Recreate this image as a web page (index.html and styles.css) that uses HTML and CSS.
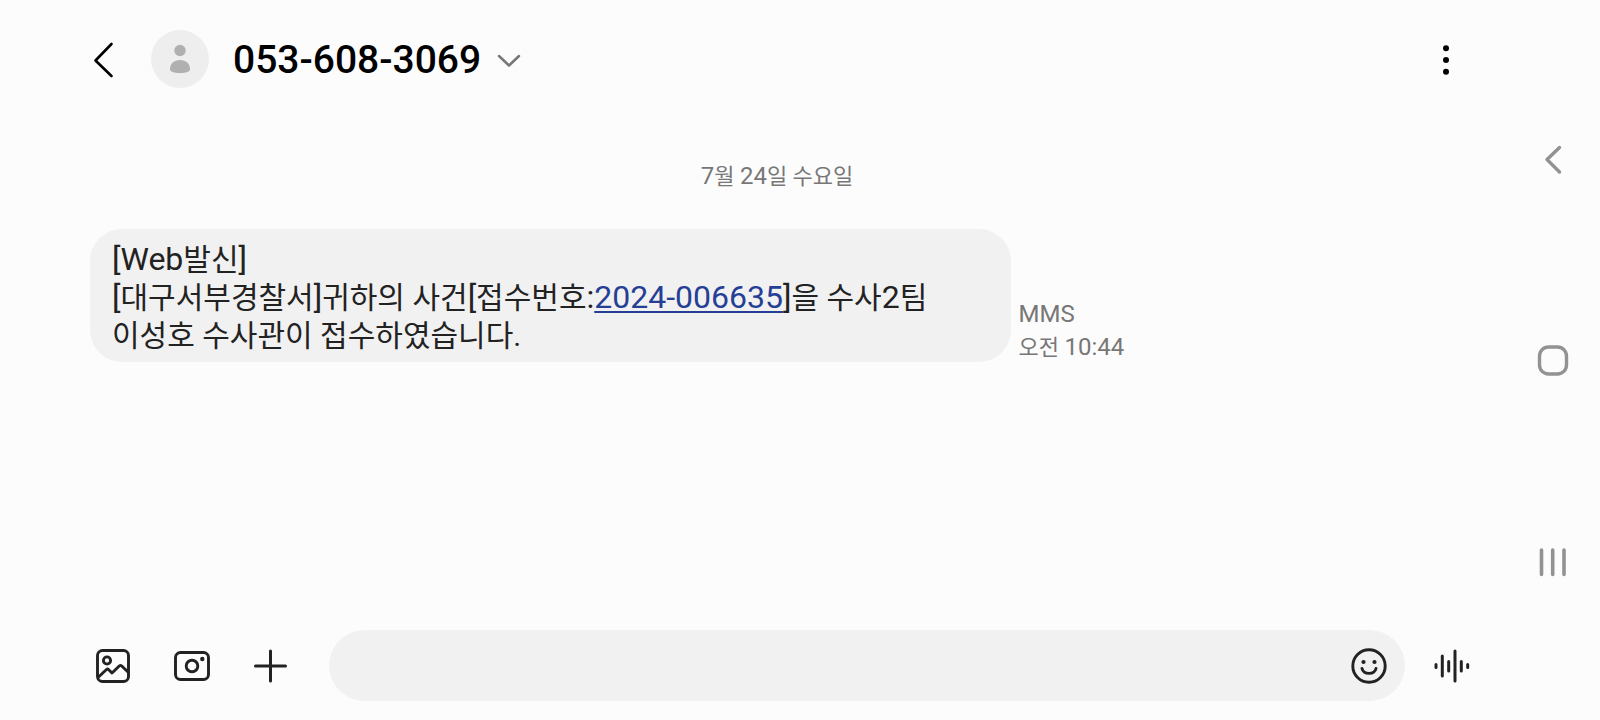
FILE: index.html
```html
<!DOCTYPE html>
<html lang="ko">
<head>
    <meta charset="UTF-8">
    <meta name="viewport" content="width=device-width, initial-scale=1.0">
    <title>053-608-3069</title>
    <link rel="stylesheet" href="styles.css">
</head>
<body>
    <div class="app">
        <header class="header">
            <button class="icon-button back" aria-label="뒤로">
                <svg width="24" height="40" viewBox="0 0 24 40"><path d="M19.500 5L3.500 21.500L19.500 37" class="line black" stroke-width="2.600"/></svg>
            </button>
            <div class="avatar">
                <svg width="58" height="58" viewBox="0 0 58 58"><circle cx="29" cy="20.500" r="5.700"/><path d="M19 39.500C19 33.500 23 30 29 30S39 33.500 39 39.500C39 41.500 35 43 29 43S19 41.500 19 39.500Z"/></svg>
            </div>
            <button class="contact">
                <span class="number">053-608-3069</span>
                <svg width="24" height="18" viewBox="0 0 24 18"><path d="M2 5L12 14.500L22 5" class="line gray" stroke-width="2.500"/></svg>
            </button>
            <button class="icon-button menu" aria-label="더보기">
                <svg width="10" height="34" viewBox="0 0 10 34"><circle cx="5" cy="6.300" r="3"/><circle cx="5" cy="18" r="3"/><circle cx="5" cy="29.700" r="3"/></svg>
            </button>
        </header>

        <main class="thread">
            <div class="date"><span class="latin">7</span>월 <span class="latin">24</span>일 수요일</div>
            <div class="message">
                <div class="bubble">
                    <span class="latin">[Web</span>발신<span class="latin">]</span><br>
                    <span class="latin">[</span>대구서부경찰서<span class="latin">]</span>귀하의 사건<span class="latin">[</span>접수번호<span class="latin">:<a href="#">2024-006635</a>]</span>을 수사<span class="latin">2</span>팀<br>
                    이성호 수사관이 접수하였습니다.
                </div>
                <div class="meta">
                    <div class="latin">MMS</div>
                    <div>오전 <span class="latin">10:44</span></div>
                </div>
            </div>
        </main>

        <form class="composer">
            <div class="tools">
                <button type="button" class="icon-button" aria-label="갤러리">
                    <svg width="36" height="36" viewBox="0 0 36 36" class="line dark" stroke-width="2.900"><rect x="2.500" y="2.500" width="31" height="31" rx="5"/><circle cx="12" cy="12.500" r="3.600"/><path d="M3.500 29L11.500 21.500Q12.500 20.500 13.500 21.500L17 25L24.500 17.800Q25.500 17 26.500 17.800L33 24"/></svg>
                </button>
                <button type="button" class="icon-button" aria-label="카메라">
                    <svg width="38" height="32" viewBox="0 0 38 32"><g class="line dark" stroke-width="2.900"><rect x="2.500" y="2.500" width="33" height="27" rx="5"/><circle cx="19" cy="16" r="5.800"/></g><circle cx="29.300" cy="9" r="2.200" class="dot"/></svg>
                </button>
                <button type="button" class="icon-button" aria-label="추가">
                    <svg width="36" height="36" viewBox="0 0 36 36"><path d="M17.500 3V33M2.500 18H32.500" class="line dark" stroke-width="3"/></svg>
                </button>
            </div>
            <div class="field">
                <input type="text" class="input" aria-label="메시지 입력">
                <button type="button" class="icon-button" aria-label="이모티콘">
                    <svg width="38" height="38" viewBox="0 0 38 38"><g class="line dark" stroke-width="2.900"><circle cx="19" cy="19" r="16.200"/><path d="M12 21.500C13.500 28 24.500 28 26 21.500"/></g><circle cx="13.500" cy="15" r="2.100" class="dot"/><circle cx="24.500" cy="15" r="2.100" class="dot"/></svg>
                </button>
            </div>
            <button type="button" class="icon-button" aria-label="음성 메시지">
                <svg width="38" height="38" viewBox="0 0 38 38"><path d="M3 17.500V20.500M9.300 9V29M15.700 14.500V24M22 4V34M28.300 14.500V24M34.700 17.500V20.500" class="line dark" stroke-width="3"/></svg>
            </button>
        </form>
    </div>

    <nav class="navbar">
        <button class="icon-button" aria-label="이전">
            <svg width="32" height="32" viewBox="0 0 32 32"><path d="M22.500 3.500L10 15.500L22.500 28" class="line nav" stroke-width="3.400"/></svg>
        </button>
        <button class="icon-button" aria-label="홈">
            <svg width="32" height="32" viewBox="0 0 32 32"><rect x="2.500" y="2" width="27" height="27" rx="9" class="line nav" stroke-width="3.400"/></svg>
        </button>
        <button class="icon-button" aria-label="최근 앱">
            <svg width="32" height="32" viewBox="0 0 32 32"><path d="M4.500 4V28.500M15.700 4V28.500M27 4V28.500" class="line nav" stroke-width="3.600"/></svg>
        </button>
    </nav>
</body>
</html>
```
FILE: styles.css
```css
* {
    box-sizing: border-box;
}

body {
    margin: 0;
    min-height: 100vh;
    display: flex;
    background: #fcfcfc;
    color: #222;
    font-family: Roboto, "Noto Sans CJK KR", sans-serif;
}

button {
    border: none;
    padding: 0;
    background: none;
    font-family: inherit;
    cursor: pointer;
}

svg {
    display: block;
}

.line {
    fill: none;
    stroke-linecap: round;
    stroke-linejoin: round;
}

.black {
    stroke: #000;
}

.dark {
    stroke: #222;
}

.gray {
    stroke: #777;
}

.nav {
    stroke: #929292;
}

.dot {
    fill: #222;
}

.icon-button {
    display: flex;
    justify-content: center;
    align-items: center;
    width: 43px;
    height: 43px;
    flex-shrink: 0;
}

.app {
    flex: 1;
    display: flex;
    flex-direction: column;
    padding-left: 48px;
}

.header {
    display: flex;
    align-items: center;
    height: 118px;
    padding: 0 39px 0 34px;
}

.avatar {
    width: 58px;
    height: 58px;
    margin: 0 24px 0 26px;
    border-radius: 50%;
    background: #eee;
    fill: #b0b0b0;
}

.contact {
    display: flex;
    align-items: center;
    gap: 16px;
    padding-top: 2px;
    color: #000;
}

.number {
    font-size: 39px;
    font-weight: 500;
}

.menu {
    margin-left: auto;
}

.thread {
    flex: 1;
    padding: 43px 42px 0;
}

.date {
    margin-bottom: 34px;
    color: #777;
    font-size: 22px;
    line-height: 32px;
    text-align: center;
}

.latin {
    line-height: 1;
}

.date .latin,
.meta .latin {
    font-size: 24px;
}

.message {
    display: flex;
    align-items: center;
    gap: 8px;
}

.bubble {
    width: 67%;
    padding: 12px 22px 7px;
    border-radius: 32px;
    background: #f1f1f1;
    font-size: 30px;
    line-height: 38px;
}

.bubble .latin {
    font-size: 32px;
}

.bubble a {
    color: #253f96;
    text-decoration-thickness: 2px;
    text-underline-offset: 3px;
}

.meta {
    padding-top: 71px;
    color: #777;
    font-size: 22px;
    line-height: 33px;
}

.meta > .latin {
    line-height: 33px;
}

.composer {
    display: flex;
    align-items: center;
    padding: 0 33px 19px 43px;
}

.tools {
    display: flex;
    gap: 36px;
}

.field {
    flex: 1;
    display: flex;
    align-items: center;
    height: 71px;
    margin: 0 25px 0 37px;
    padding: 0 15px 0 32px;
    border-radius: 36px;
    background: #f1f1f1;
}

.input {
    flex: 1;
    min-width: 0;
    border: none;
    outline: none;
    background: none;
    font-family: inherit;
    font-size: 30px;
}

.navbar {
    display: flex;
    flex-direction: column;
    justify-content: space-around;
    align-items: center;
    width: 94px;
    padding: 59px 0 57px;
}
```
